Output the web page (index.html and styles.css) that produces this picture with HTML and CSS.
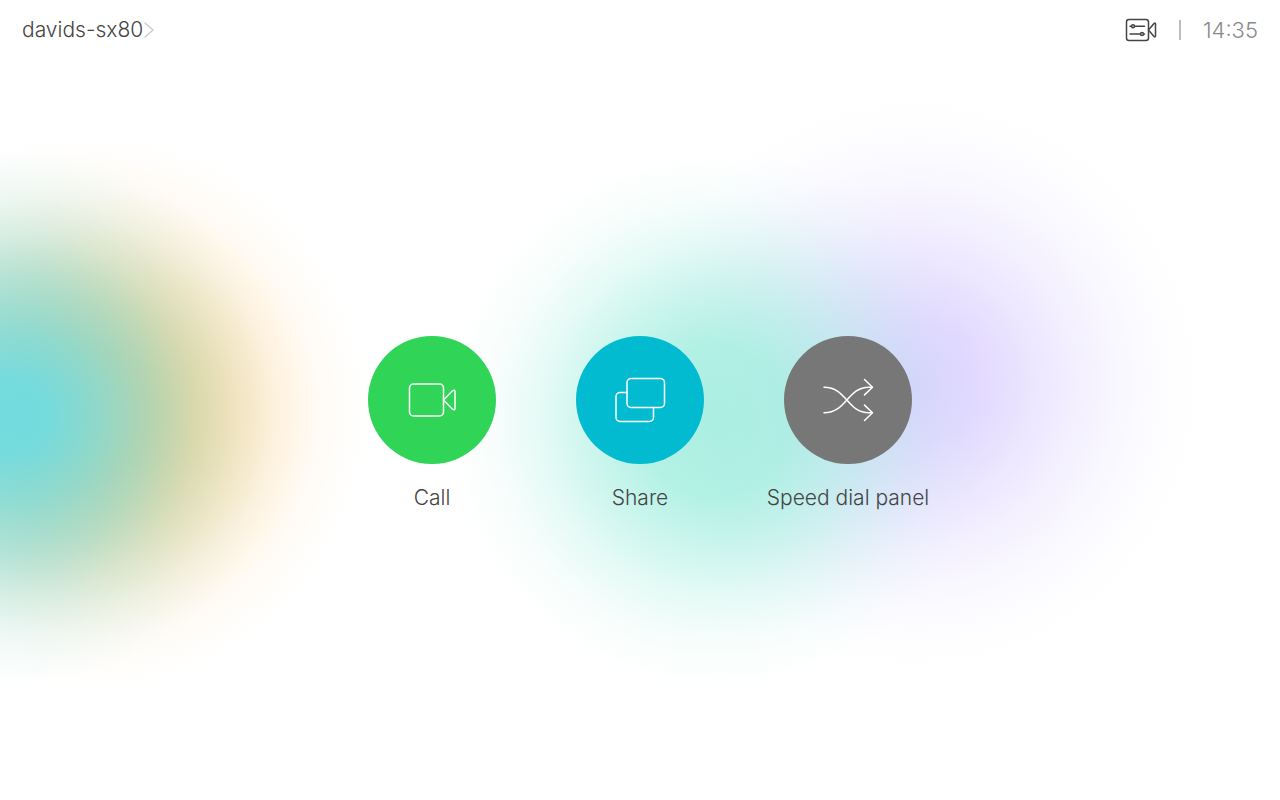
FILE: index.html
```html
<!DOCTYPE html>
<html lang="en">
<head>
<meta charset="utf-8">
<title>davids-sx80</title>
<link rel="stylesheet" href="styles.css">
</head>
<body>
<header class="topbar">
  <button class="device" type="button">
    <span>davids-sx80</span>
    <svg class="chevron" viewBox="0 0 12 18" aria-hidden="true"><path d="M2 2l8 7-8 7"/></svg>
  </button>
  <div class="status">
    <button class="camera" type="button" aria-label="Camera controls">
      <svg viewBox="0 0 32 24" aria-hidden="true">
        <rect x="1.500" y="1.500" width="22" height="21" rx="2.500"/>
        <path d="M23.500 12L29 5.500q1.500-1 1.500 .5v12q0 1.500-1.500 .5z"/>
        <circle cx="8" cy="8.200" r="1.500"/><path d="M5 8.200h1.500M9.500 8.200H19.500"/>
        <circle cx="17" cy="16" r="1.500"/><path d="M5 16h10.500M18.500 16H19.500"/>
      </svg>
    </button>
    <span class="divider"></span>
    <time class="clock">14:35</time>
  </div>
</header>
<main class="actions">
  <button class="action" type="button">
    <span class="disc call"><svg viewBox="0 0 64 64" aria-hidden="true">
      <rect x="9.500" y="16" width="34" height="32" rx="4"/>
      <path d="M43.500 32l9-9.200q2.500-1.500 2.500 1v16.400q0 2.500-2.500 1z"/>
    </svg></span>
    <span class="label">Call</span>
  </button>
  <button class="action" type="button">
    <span class="disc share"><svg viewBox="0 0 64 64" aria-hidden="true">
      <rect x="19" y="10.500" width="37.500" height="29" rx="4"/>
      <path d="M19 24.500h-7a4 4 0 0 0-4 4v21a4 4 0 0 0 4 4h29.500a4 4 0 0 0 4-4v-10"/>
    </svg></span>
    <span class="label">Share</span>
  </button>
  <button class="action" type="button">
    <span class="disc panel"><svg viewBox="0 0 64 64" aria-hidden="true">
      <path d="M8 19.200C31 19.200 31 44.800 53 44.800H56M8 44.800C31 44.800 31 19.200 53 19.200H56"/>
      <path d="M48.500 11.500l8 7.700-8 7.700M48.500 37.100l8 7.700-8 7.700"/>
    </svg></span>
    <span class="label">Speed dial panel</span>
  </button>
</main>
</body>
</html>
```

FILE: styles.css
```css
* { box-sizing: border-box; }

body {
  margin: 0;
  min-height: 100vh;
  display: flex;
  flex-direction: column;
  font-family: Inter, "Liberation Sans", sans-serif;
  font-weight: 300;
  font-size: 21px;
  line-height: 28px;
  color: #444;
  background:
    radial-gradient(circle 270px at 1% 52%, rgb(110 220 226 / 98%) 0, rgb(110 220 226 / 94%) 14%, rgb(110 220 226 / 76%) 32%, rgb(110 220 226 / 50%) 52%, rgb(110 220 226 / 26%) 68%, rgb(110 220 226 / 10%) 83%, rgb(110 220 226 / 3%) 94%, transparent 100%),
    radial-gradient(circle 280px at 7% 51.500%, rgb(255 200 115) 0, rgb(255 200 115 / 94%) 22%, rgb(255 200 115 / 72%) 38%, rgb(255 200 115 / 48%) 52%, rgb(255 200 115 / 23%) 67%, rgb(255 200 115 / 8%) 81%, rgb(255 200 115 / 2%) 93%, transparent 100%),
    radial-gradient(circle 270px at 56% 52.500%, rgb(160 238 222 / 88%) 0, rgb(160 238 222 / 80%) 28%, rgb(160 238 222 / 53%) 48%, rgb(160 238 222 / 25%) 67%, rgb(160 238 222 / 7%) 84%, transparent 100%),
    radial-gradient(circle 290px at 71.500% 48%, rgb(212 198 255 / 80%) 0, rgb(212 198 255 / 68%) 20%, rgb(212 198 255 / 50%) 36%, rgb(212 198 255 / 26%) 57%, rgb(212 198 255 / 9%) 77%, rgb(212 198 255 / 2%) 91%, transparent 100%),
    #fff;
}

button {
  padding: 0;
  border: 0;
  background: none;
  font: inherit;
  color: inherit;
  cursor: pointer;
}

svg {
  display: block;
  fill: none;
  stroke: currentColor;
  stroke-linecap: round;
  stroke-linejoin: round;
}

.topbar {
  display: flex;
  justify-content: space-between;
  align-items: center;
  height: 60px;
  padding: 0 22px;
}

.device {
  display: flex;
  align-items: center;
}

.chevron {
  width: 12px;
  height: 18px;
  color: #ccc;
  stroke-width: 1.5;
}

.status {
  display: flex;
  align-items: center;
  gap: 22px;
  color: #8a8a8a;
}

.camera svg {
  width: 32px;
  height: 24px;
  color: #444;
  stroke-width: 1.5;
}

.divider {
  width: 2px;
  height: 20px;
  background: #bbb;
}

.clock { font-size: 22px; }

.actions {
  flex: 1;
  display: flex;
  justify-content: center;
  align-items: center;
  gap: 48px;
  padding-bottom: 12px;
}

.action {
  width: 160px;
  display: flex;
  flex-direction: column;
  align-items: center;
  gap: 20px;
}

.disc {
  display: grid;
  place-items: center;
  width: 128px;
  height: 128px;
  border-radius: 50%;
  color: #fff;
}

.disc svg {
  width: 64px;
  height: 64px;
  stroke-width: 1.5;
}

.call { background: #30d557; }
.share { background: #03bbd0; }
.panel { background: #777; }

.label { white-space: nowrap; }
```
